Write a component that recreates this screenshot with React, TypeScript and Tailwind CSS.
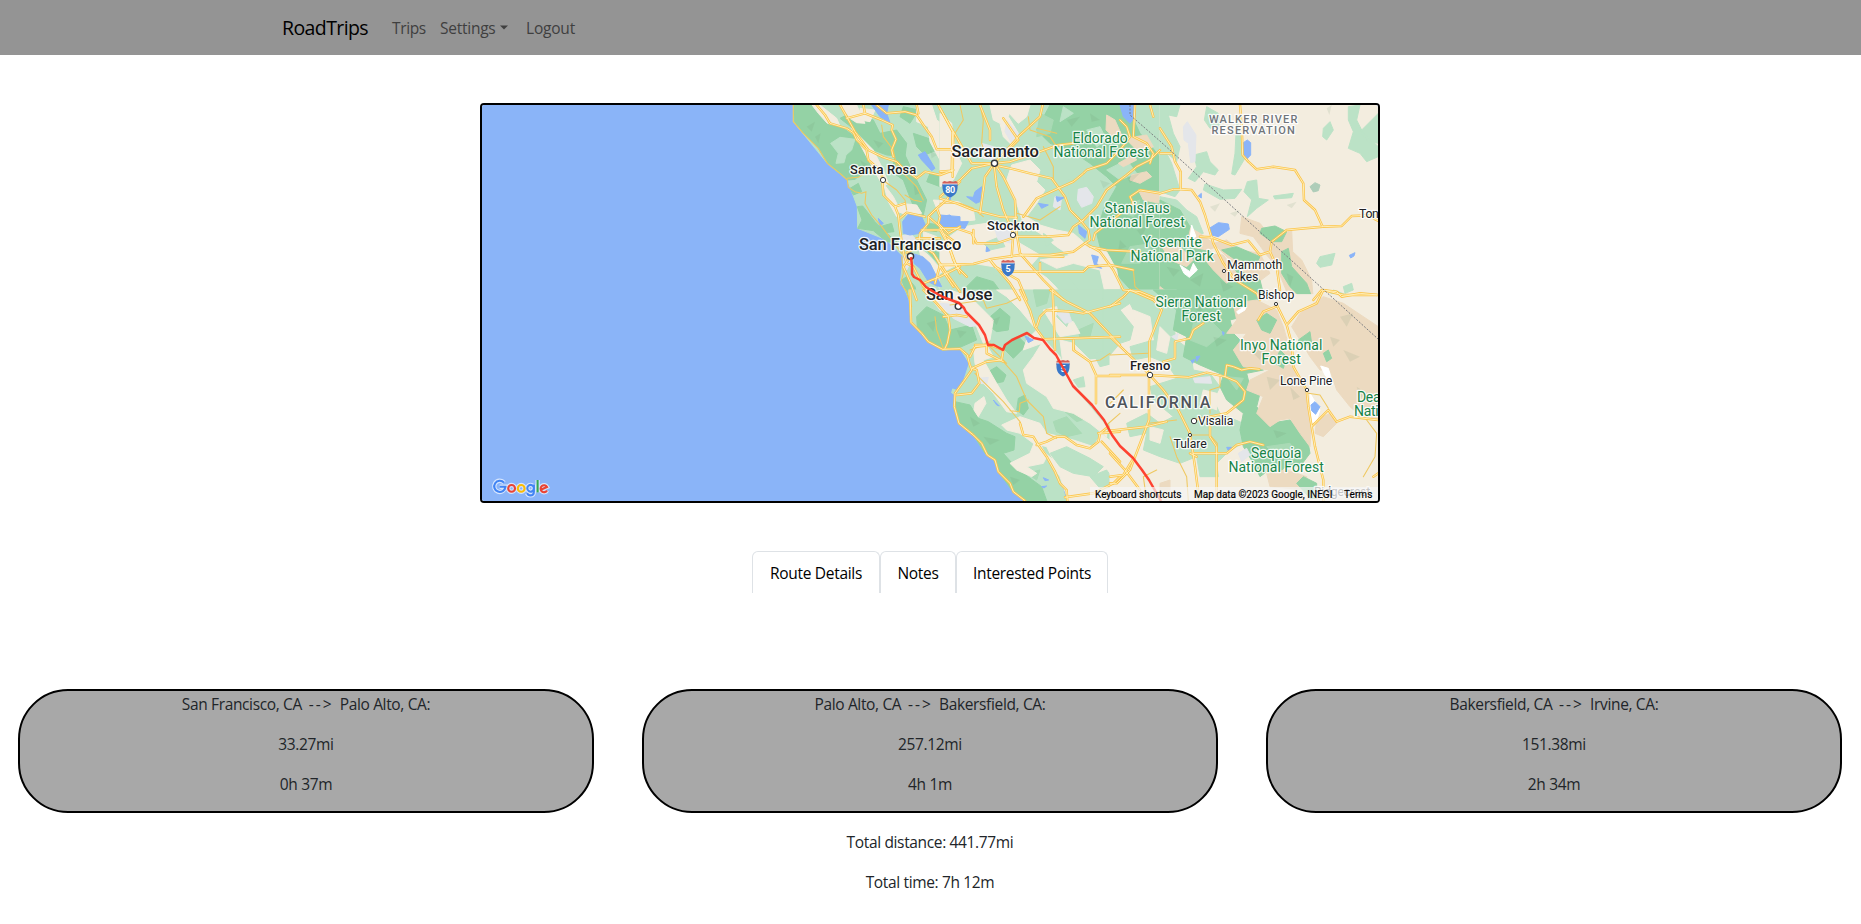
import React from "react";

type Tile = { x: number; y: number };
const A: Tile = { x: 740, y: 100 };
const B: Tile = { x: 940, y: 100 };
const C: Tile = { x: 1160, y: 100 };
const E: Tile = { x: 860, y: 290 };
const F: Tile = { x: 1110, y: 290 };

const CREAM = "#f3eddf";
const LIGHT = "#bbe2c6";
const DARK = "#94d2a5";
const MID = "#a9dab5";
const WATER = "#8ab4f8";
const BROWN = "#ecdac0";
const GREY = "#e4e6ea";

function At({ t, children }: { t: Tile; children: React.ReactNode }) {
  return <g transform={`translate(${t.x} ${t.y}) scale(0.33333)`}>{children}</g>;
}

const fills: { t: Tile; c: string; d: string }[] = [
  // North coast
  { t: A, c: LIGHT, d: "M160 0V65L262 190L322 240L352 320L353 385L440 420L490 470L482 540L508 600L660 600V0Z" },
  { t: A, c: DARK, d: "M160 0L163 65L190 100L235 145L262 190L322 240L345 238L372 215L395 220L400 190L375 160L345 110L300 78L262 70L235 40L200 0Z" },
  { t: A, c: LIGHT, d: "M272 130L300 112L345 118L335 150L318 165L312 188L288 190L295 160Z" },
  { t: A, c: DARK, d: "M300 55L330 40L400 60L420 100L470 90L500 130L495 170L440 165L400 150L370 120L345 90Z" },
  { t: A, c: DARK, d: "M470 150L495 165L530 240L560 300L550 345L525 330L505 280L490 240L455 215Z" },
  { t: A, c: DARK, d: "M520 100L580 120L590 150L555 165L530 140ZM570 220L610 230L600 260L560 245ZM490 20L535 30L510 70L480 50ZM330 265L355 250L365 275L340 285Z" },
  { t: A, c: DARK, d: "M352 320L368 318L405 365L440 400L475 430L440 425L400 392L353 385L366 360ZM420 380L455 370L462 395L435 398Z" },
  { t: A, c: DARK, d: "M485 540L500 530L525 560L535 600L508 600ZM550 440L600 460L640 500L620 520L585 480ZM565 370L600 375L590 395L560 390Z" },
  { t: A, c: CREAM, d: "M205 0L240 15L290 55L300 78L262 70L235 40ZM300 15L350 15L375 70L350 68L330 55ZM360 25L405 30L390 65L360 60Z" },
  { t: A, c: CREAM, d: "M335 85L355 105L400 150L430 210L445 250L430 260L405 215L380 170ZM530 15L575 15L590 60L640 95L660 150L660 260L625 235L600 180L570 125L565 80L530 65Z" },
  { t: A, c: CREAM, d: "M430 250L460 290L480 330L470 350L445 305ZM480 310L530 315L545 340L500 345L475 335ZM580 300L660 305V340L600 350ZM550 395L590 410L580 430L552 425ZM535 440L570 470L630 540L660 600H620L590 550L550 500Z" },
  { t: A, c: GREY, d: "M480 410L510 400L535 425L505 440ZM490 460L515 480L500 510L490 490ZM600 570L655 560L660 600H620Z" },
  // Central valley and Sierra
  { t: B, c: LIGHT, d: "M0 0H660V600H0Z" },
  { t: B, c: DARK, d: "M330 15H560L600 100L660 170V420L660 600H600L545 540L500 480L480 440L470 400L490 330L530 260L500 230L450 190L390 150L330 130L290 90Z" },
  { t: B, c: LIGHT, d: "M440 90L480 80L500 120L470 140ZM500 210L560 180L590 220L540 240ZM370 20L400 40L360 65ZM380 240L430 230L440 320L420 350L390 310Z" },
  { t: B, c: MID, d: "M300 40L340 60L330 100L290 110ZM545 490L570 440L640 430L600 490ZM520 330L600 300L580 350Z" },
  { t: B, c: CREAM, d: "M0 40L35 70L45 150L65 190L40 240L0 260ZM0 300L55 305L100 330L105 360L60 365L30 345L0 345ZM150 15L215 15L205 50L235 100L215 135L190 110L180 70L160 60ZM185 15L270 15L260 50L235 70Z" },
  { t: B, c: CREAM, d: "M215 195L270 180L300 210L290 245L315 270L290 310L260 350L300 375L350 390L400 400L440 435L430 465L395 470L350 440L300 400L250 370L230 310L200 240Z" },
  { t: B, c: CREAM, d: "M70 380L140 370L210 385L240 430L300 465L270 500L330 540L380 600H250L200 530L160 500L100 490L40 500L0 520V430ZM440 440L500 455L530 510L545 600H500L480 510L400 490L350 505L300 480L400 465Z" },
  { t: B, c: LIGHT, d: "M70 540L120 510L180 530L230 600H60ZM310 400L340 420L320 440ZM130 430L180 410L195 440L150 450ZM300 510L380 525L440 600H390Z" },
  { t: B, c: DARK, d: "M80 560L110 530L160 545L200 600H100Z" },
  { t: B, c: BROWN, d: "M500 45L525 60L545 105L520 110L498 90ZM535 190L580 165L590 180L550 200ZM575 225L620 215L635 230L600 250L570 240ZM595 270L660 275V310L610 300ZM555 115L620 105L640 140L600 160Z" },
  { t: B, c: GREY, d: "M415 268L440 262L460 290L455 310L425 322L412 300ZM125 130L160 140L165 180L130 175ZM345 290L365 292L360 330L340 320ZM200 60L235 100L215 130L195 95ZM160 375L225 385L215 430L175 420Z" },
  { t: B, c: WATER, d: "M540 15H585V50L570 70L550 50ZM105 275L125 260L120 305L108 310L80 290L100 292ZM0 350L30 345L50 365L85 365L75 385L0 380ZM295 310L325 315L305 325ZM415 375L440 395L435 415L418 400ZM455 465L475 470L470 490L485 505L465 500ZM140 440L150 452L138 455ZM348 290L372 293L352 305Z" },
  // Bays and lakes
  { t: A, c: WATER, d: "M488 365L505 342L545 350L556 375L540 400L510 405L490 400ZM522 462L548 470L570 490L590 530L605 560L590 558L565 545L540 505L522 490ZM395 15H445L440 40L450 68L420 50ZM535 165L555 155L585 205L575 212L545 180ZM600 345L660 350V375L620 368ZM415 355L430 370L420 378ZM620 255L640 270L630 300Z" },
  // Nevada
  { t: C, c: CREAM, d: "M0 0H660V600H0Z" },
  { t: C, c: LIGHT, d: "M0 15L60 15L50 50L25 45L40 100L60 140L50 185L0 140ZM0 120L35 190L60 270L45 290L0 275ZM230 60L248 130L255 175L225 225L215 222L225 160ZM140 20L175 40L180 80L150 85L133 60Z" },
  { t: C, c: LIGHT, d: "M102 165L140 155L150 185L175 210L165 225L130 215L105 245L85 235L110 200ZM135 252L190 270L245 268L225 295L180 298L130 270ZM262 245L290 240L295 295L325 300L290 325L262 350L275 300L252 275ZM340 288L400 280L395 293L345 297Z" },
  { t: C, c: LIGHT, d: "M565 20L600 15L590 60L610 100L655 140V170L620 185L600 160L565 145L580 95L565 60ZM600 95L655 40V130L625 125ZM490 85L510 65L520 90L500 120L488 110ZM470 490L480 470L525 460L515 495L480 502ZM550 560L575 550L580 570L555 580ZM520 570L560 585L540 600H500Z" },
  { t: C, c: LIGHT, d: "M0 290L50 300L80 330L110 350L130 400L90 410L40 380L0 390Z" },
  { t: C, c: BROWN, d: "M245 350L300 370L340 420L395 390L398 455L425 480L455 540L460 600H390L350 500L320 465L280 410L240 400ZM50 360L120 400L160 430L200 420L240 450L300 460L330 520L290 550L210 480L170 440L120 460L80 400Z" },
  { t: C, c: DARK, d: "M0 300L60 330L90 380L75 440L150 455L210 500L300 540L310 580L260 600H0ZM305 385L345 378L380 395L365 425L335 425L300 400ZM365 455L385 445L395 500L440 550L455 590L430 600L390 560L365 520ZM185 450L230 440L300 470L290 490L220 475Z" },
  { t: C, c: BROWN, d: "M0 430L60 440L100 480L80 500L30 480ZM120 460L190 465L230 520L200 550L160 510ZM0 560L20 575L0 590Z" },
  { t: C, c: "#fff", d: "M95 375L108 410L90 418ZM60 495L90 515L100 490L112 510L88 532L72 520ZM255 585L235 600H250Z" },
  { t: C, c: GREY, d: "M70 80L82 65L108 105L105 185L92 188L85 130L72 120Z" },
  { t: C, c: WATER, d: "M250 128L262 120L272 128V165L260 178L250 165ZM148 385L175 368L205 372L208 388L175 410L155 405ZM568 466L585 458L582 468L572 474ZM115 288L124 280V294Z" },
  { t: C, c: "#aecdb9", d: "M450 260L465 248L480 255L475 272L460 276Z" },
  // South coast
  { t: E, c: LIGHT, d: "M145 0L153 97L205 155L248 180L300 176L328 220L310 275L285 310L283 350L297 400L340 435L380 495L405 510L415 545L450 580L460 605L495 635L620 640L600 560L700 500L780 540V0Z" },
  { t: E, c: DARK, d: "M170 80L200 50L250 75L270 120L335 105L350 150L300 172L250 180L205 150L172 115ZM385 85L420 55L450 80L445 120L410 125L390 110ZM285 335L330 345L355 385L385 395L440 430L465 440L462 480L430 490L470 535L545 590L560 632H495L455 600L415 545L400 505L375 490L340 435L297 400Z" },
  { t: E, c: DARK, d: "M385 245L410 230L438 255L430 275L405 280ZM475 325L495 315L505 355L490 375L470 360ZM430 175L475 140L500 165L460 205Z" },
  { t: E, c: MID, d: "M580 395L620 380L665 430L620 440L590 425ZM615 365L680 385L650 395ZM620 510L690 530L670 550L630 535ZM655 120L700 100L690 140L660 145ZM520 0H570L560 40L530 50ZM500 550L540 540L530 570Z" },
  { t: E, c: CREAM, d: "M270 0L330 20L400 90L390 150L370 160L350 110L310 80L240 60L210 20ZM410 0H480L510 80L545 140L600 200L640 290L740 410V440L690 400L640 370L580 355L560 320L500 280L490 240L520 200L545 160L490 180L500 150L530 120L480 60L440 20Z" },
  { t: E, c: CREAM, d: "M550 60L590 50L600 90L640 95L660 130L600 140ZM600 150L640 160L690 210L780 200V400L740 400L690 340L640 280L610 230ZM340 170L380 165L400 200L370 210L410 280L440 330L470 370L440 365L400 310L360 270L345 220Z" },
  { t: E, c: CREAM, d: "M345 340L372 320L378 340L355 380L342 360ZM425 405L480 380L540 400L560 430L640 450L700 470L725 430L780 480V632H625L600 560L545 480L580 510L560 470L520 460L480 430L440 420ZM450 520L510 490L530 440L560 500L550 520L500 530L530 550L515 560L470 540Z" },
  { t: E, c: LIGHT, d: "M570 490L620 470L690 505L730 530L700 560L640 550L600 530ZM640 270L670 260L675 290L655 292ZM690 560L740 540L775 590L720 595ZM600 40L640 60L620 110L590 80ZM740 0H780V80L720 40ZM700 190L780 170V215L720 230Z" },
  { t: E, c: GREY, d: "M240 40L300 45L330 90L360 105L330 110L280 85ZM355 265L385 262L380 282L360 280ZM590 70L625 65L635 95L615 100Z" },
  { t: E, c: WATER, d: "M495 138L520 150L505 158ZM400 330L418 348L410 345ZM550 563L566 570L555 572ZM545 590L560 588L552 594Z" },
  { t: E, c: LIGHT, d: "M278 297L292 302L290 318L275 308Z" },
  // Southern Sierra
  { t: F, c: CREAM, d: "M0 14H825V640H0Z" },
  { t: F, c: LIGHT, d: "M-20 0H70L60 40L30 60L70 110L60 150L30 160L0 195L-20 190Z" },
  { t: F, c: LIGHT, d: "M40 0H200L240 60L190 110L200 150L240 180L250 240L300 250L330 290L310 330L330 370L400 400L420 450L360 480L320 520L325 560L270 560L260 500L210 520L150 500L100 480L110 430L60 440L50 400L110 370L150 400L190 380L130 330L120 290L200 265L170 220L120 200L70 210L60 170L130 150L110 110L70 60Z" },
  { t: F, c: CREAM, d: "M70 60L120 80L130 150L80 140ZM150 110L180 140L170 190L140 180ZM120 410L160 420L150 460L120 450ZM280 300L320 310L320 360L270 340Z" },
  { t: F, c: DARK, d: "M130 0H450L440 70L360 90L370 130L410 170L440 220L460 240L410 250L420 290L450 310L440 350L480 400L540 390L590 430L600 490L570 530L530 525L500 560L470 545L450 560L430 520L400 470L390 420L400 370L350 330L330 290L340 255L270 225L220 200L230 140L190 120L200 60Z" },
  { t: F, c: BROWN, d: "M370 40L440 30L500 60L520 110L540 180L560 260L590 310L605 400L600 470L570 430L540 385L510 390L480 410L440 370L460 320L410 300L420 270L480 240L400 230L370 180L410 130L350 130L380 90Z" },
  { t: F, c: BROWN, d: "M570 70L640 20L700 40L805 110V390L760 385L720 350L680 300L660 240L630 240L600 200L570 150L545 110ZM620 390L660 370L680 400L640 440L615 430ZM470 550L530 540L590 560L590 600L480 590ZM150 580L180 570V600H150Z" },
  { t: F, c: DARK, d: "M440 90L470 70L500 90L480 130L455 120ZM565 150L600 125L605 160L575 170ZM640 190L655 180L665 205L650 215ZM560 580L580 560L620 580V625H600ZM510 180L530 200L520 235L495 220Z" },
  { t: F, c: MID, d: "M250 100L300 90L340 130L290 170L240 150ZM470 470L540 460L560 490L500 500ZM350 260L400 265L380 300Z" },
  { t: F, c: "#fff", d: "M380 65L410 45L405 60L385 72ZM632 228L655 235L668 285L645 255ZM600 310L630 360L620 390L605 400Z" },
  { t: F, c: GREY, d: "M250 265L300 260L305 280L255 278ZM185 140L205 130L200 150ZM385 490L410 475L420 495L395 515Z" },
  { t: F, c: WATER, d: "M603 345L615 335L630 350L617 373L605 362ZM350 472L365 472L355 482ZM243 212L255 208L248 220ZM258 200L270 198L260 214ZM337 125L343 128L340 136Z" },
];

const shade: { t: Tile; d: string }[] = [
  { t: A, d: "M200 80L225 65L215 95ZM225 110L242 100L235 130ZM360 180L385 195L370 200ZM400 120L430 130L415 145ZM520 250L540 280L525 285ZM570 150L590 165L575 175Z" },
  { t: B, d: "M380 60L420 50L395 80ZM450 40L480 60L455 65ZM560 230L600 220L570 250ZM600 320L640 330L610 345ZM480 240L510 250L490 265ZM590 390L620 380L605 410ZM540 420L560 440L535 450Z" },
  { t: C, d: "M20 500L60 510L40 530ZM90 540L130 520L120 560ZM180 540L220 560L190 575ZM150 320L180 310L165 335ZM210 340L240 330L225 350ZM380 315L410 305L395 325ZM500 25L515 15L508 45ZM380 520L400 530L390 560Z" },
  { t: E, d: "M200 100L230 90L220 125ZM330 380L360 400L340 410ZM370 440L420 450L390 465ZM450 560L480 570L460 585ZM395 90L420 80L410 105ZM290 120L320 125L300 145Z" },
  { t: F, d: "M250 50L290 40L270 70ZM310 140L350 150L320 170ZM430 190L470 170L450 210ZM470 260L510 270L480 300ZM540 290L570 320L550 330ZM690 80L730 70L710 110ZM700 180L750 200L720 215ZM660 140L690 150L670 170ZM490 420L530 430L500 445ZM740 290L770 310L750 325Z" },
];

const minor: { t: Tile; d: string }[] = [
  { t: A, d: "M160 0L160 65L190 100L235 145L262 190L300 220L322 240L325 262L345 275L365 280L378 275L375 310L395 345L425 380L470 440L485 460" },
  { t: A, d: "M322 235L355 232L390 210M428 240L470 270L495 300L500 330M425 75L430 110L460 150L470 200L500 230L530 260L550 300M485 470L490 520L482 550L500 575L508 600L515 620M495 285L520 300L545 305" },
  { t: B, d: "M60 15L70 60L45 100M120 15L130 60L125 130L135 160M265 50L270 90L330 110L350 140M290 85L350 100M0 310L60 310L100 325L130 350M580 510L585 560L620 590M230 340L300 360L360 320M340 240L340 200L310 140" },
  { t: E, d: "M225 80L230 120L250 175M345 250L430 335L480 395L490 430M430 215L470 260L500 330L550 380L560 430L590 445M505 330L480 340L478 365L450 362M270 45L370 30L380 55L440 40L480 20M330 180L390 160M640 150L645 185L690 215L720 210L750 190M780 370L740 405M380 160L440 220L425 210" },
  { t: F, d: "M0 195L115 190M330 260L330 290L300 300V370M0 340L40 300M115 400L200 390M180 440L200 500L230 560L235 632M595 310L630 315L655 355M770 390L800 430L795 500L760 560M140 540L100 560L110 632M240 435H300L322 460L320 560" },
];

const major: { t: Tile; d: string }[] = [
  { t: A, d: "M230 15L255 45L270 70L320 85L340 98L350 120L380 150L385 180L425 215L430 285L465 320L475 345L480 390L485 425L492 465M300 15L320 50L345 95L385 150L430 172L470 185L495 210L530 235L555 215L600 225L640 210M370 15L375 40L425 60L458 75L455 90L468 118L455 150L460 170M375 40L320 55M410 15L440 40L495 35L530 45L550 75L575 110L590 148H640M530 15L535 40" },
  { t: A, d: "M595 15L638 95L635 215M660 245L640 265L620 300L590 325L565 350L565 370L540 400L535 440L500 458M480 355L500 338L555 350M590 325L600 350L595 370L625 400L660 380M545 390L600 390L625 435L640 480L660 520M465 320L495 310M565 350L600 380M492 465L500 490L520 500L550 560L600 600M540 435L580 460L620 520L660 575M600 495H660M550 550L600 530L660 500M530 415L600 415M505 480L490 500L510 545L530 600M610 400L650 430M580 460L600 495L585 550" },
  { t: B, d: "M0 25L40 95L38 230M40 95L95 190L163 190L200 150L240 105L300 50L308 15M163 190L95 205L60 240L0 290M163 190L210 185L300 155L355 135L400 130M163 200L170 260L190 330L220 400L215 470M163 190L190 230L225 300L230 400L240 460L310 540L370 600M163 195L210 205L270 220L335 235L375 290L390 330L425 365L445 390L450 420L435 430L480 455L520 510L550 570L600 575L660 600M250 350L290 295L355 265L400 245L430 220L440 210L500 190L540 150L570 110L560 80L540 60M425 365L470 320L500 270L560 225L590 200L630 180L660 150" },
  { t: B, d: "M0 295L50 310L100 330L180 350L230 352M0 385L50 385L95 400L110 430L170 430L230 410L320 410L385 405L400 380L430 360M0 495L100 492L150 478L240 465L330 465L400 455L435 430M240 465L370 470M200 515L430 515L445 500L510 495L580 510M190 55L235 120L215 140M130 270L135 230L160 195M150 480L210 550L240 600M150 480L165 500L235 540L260 600M100 390V430M0 380L20 420L50 500L80 530M0 500L40 560M450 440L500 450L600 455M120 340L130 270M460 420L465 400L530 350L580 310L570 290L600 270L660 280M585 15L580 110L620 130L640 160L630 190M630 15L640 50M120 15L150 90V120M0 215L35 212M300 490V515" },
  { t: C, d: "M0 85L35 140L45 185L62 215L62 268L95 270L120 305L135 345L160 430L190 490L225 540L290 580L300 600M0 160L35 160M0 280L40 268L62 268M240 15L245 75L248 165L265 185L290 208L340 200L405 210L430 250L432 300L465 330L488 380L545 378L575 348L655 345M488 380L380 390L335 425L330 455L350 500L360 570M120 410L155 412L215 435L265 422L300 465L330 455M460 600L485 570L530 575L545 590L600 580L655 585M640 355L655 363" },
  { t: E, d: "M150 0L153 97L185 130L205 155L248 178L300 176L322 195L328 220L335 240L310 275L285 310L283 350L297 400L340 435L365 460L382 495L405 510L415 545L450 580L460 605L495 632M190 0L230 40L265 80L270 120L262 160L255 175M250 80L290 75L320 80M345 165L390 165L430 180L425 210L380 215L335 235L350 240L358 280L335 310L290 315M330 200L345 170L400 165M480 0L510 60L525 110L550 145M530 110L540 80L560 60L640 65L670 70L780 40M550 148L640 145L780 140M578 0L585 180M640 150L640 180L690 215L708 255V340M708 258H780M570 0L620 35L690 70L780 165" },
  { t: E, d: "M480 400L490 435L520 440L535 465L560 500L585 545L600 580L620 600L622 632M530 465L560 455L590 440L615 440L650 465L690 475L715 455L720 430L745 410M725 455L780 515M715 430L780 425M615 622L700 610L760 580L780 560M380 160L380 190L430 215" },
  { t: F, d: "M0 140L115 250L160 300L205 360L240 430L255 530L268 632M0 255L120 255L235 262L290 248L345 260L380 275L405 305L400 330L350 370L300 380L250 390M117 250L117 390L60 540L20 580H0M345 260L350 225L370 230L395 240L420 235L448 238M118 250V155L155 60L130 30L60 0M160 215L195 205L195 155L240 145L250 120L280 100M0 422L110 410L170 395M250 490H350L380 465L420 455L460 465M0 50L40 20L60 0M300 380V440L320 470V632" },
  { t: F, d: "M498 40L530 105L545 160L550 230L590 300L595 350L605 410L615 470L640 570V632M530 105L565 65L620 40L640 0L700 15L800 15M605 410L655 360L680 395L720 380L805 390M498 50L460 65L445 90M0 490L45 540L90 600M0 560L40 555L70 505M240 490L260 500M790 560L805 550" },
];

const routeD =
  "M911 257L912 266L912 274L914 277L920 280L926 287L934 292L943 297L959 303L964 308L966 312L979 325L985 335L988 345L994 345L1003 350L1005 345L1012 340L1027 333L1034 338L1043 340L1050 349L1056 355L1073 386L1092 405L1104 420L1112 435L1120 446L1133 458L1142 470L1149 480L1161 501";

type L = { x: number; y: number; s: number; c?: string; w?: number; a?: "start" | "middle"; tl?: number; t: string };
const GREEN = "#188448";
const labels: L[] = [
  { x: 995, y: 157, s: 16.5, w: 500, tl: 87, t: "Sacramento" },
  { x: 883, y: 174, s: 13, w: 500, tl: 66, t: "Santa Rosa" },
  { x: 1013, y: 230, s: 13, w: 500, tl: 52, t: "Stockton" },
  { x: 910, y: 250, s: 16.5, w: 500, tl: 102, t: "San Francisco" },
  { x: 959, y: 300, s: 16.5, w: 500, tl: 66, t: "San Jose" },
  { x: 1150, y: 370, s: 13, w: 500, tl: 40, t: "Fresno" },
  { x: 1100, y: 143, s: 14, c: GREEN, tl: 55, t: "Eldorado" },
  { x: 1101, y: 157, s: 14, c: GREEN, tl: 95, t: "National Forest" },
  { x: 1137, y: 213, s: 14, c: GREEN, tl: 65, t: "Stanislaus" },
  { x: 1137, y: 227, s: 14, c: GREEN, tl: 95, t: "National Forest" },
  { x: 1172, y: 247, s: 14, c: GREEN, tl: 59, t: "Yosemite" },
  { x: 1172, y: 261, s: 14, c: GREEN, tl: 83, t: "National Park" },
  { x: 1201, y: 307, s: 14, c: GREEN, tl: 91, t: "Sierra National" },
  { x: 1201, y: 321, s: 14, c: GREEN, tl: 39, t: "Forest" },
  { x: 1281, y: 350, s: 14, c: GREEN, tl: 82, t: "Inyo National" },
  { x: 1281, y: 364, s: 14, c: GREEN, tl: 39, t: "Forest" },
  { x: 1276, y: 458, s: 14, c: GREEN, tl: 50, t: "Sequoia" },
  { x: 1276, y: 472, s: 14, c: GREEN, tl: 95, t: "National Forest" },
  { x: 1357, y: 402, s: 14, c: GREEN, a: "start", t: "Death Valley" },
  { x: 1354, y: 416, s: 14, c: GREEN, a: "start", t: "National Park" },
  { x: 1253, y: 123, s: 11, w: 500, c: "#70757a", tl: 88, t: "WALKER RIVER" },
  { x: 1253, y: 134, s: 11, w: 500, c: "#70757a", tl: 83, t: "RESERVATION" },
  { x: 1157.5, y: 407.5, s: 16, w: 500, c: "#4f545a", tl: 105, t: "CALIFORNIA" },
  { x: 1227, y: 269, s: 12.3, a: "start", tl: 55, t: "Mammoth" },
  { x: 1227, y: 281, s: 12.3, a: "start", tl: 31, t: "Lakes" },
  { x: 1276, y: 299, s: 12.3, tl: 36, t: "Bishop" },
  { x: 1306, y: 385, s: 12.3, tl: 52, t: "Lone Pine" },
  { x: 1198, y: 425, s: 12.3, a: "start", tl: 35, t: "Visalia" },
  { x: 1190, y: 448, s: 12.3, tl: 33, t: "Tulare" },
  { x: 1359, y: 218, s: 12.3, a: "start", t: "Tonopah" },
  { x: 1342, y: 496, s: 12.3, tl: 56, c: "#555", t: "Ridgecrest" },
];

const dots: [number, number, number][] = [
  [994.5, 163.3, 3.1], [883, 180, 2.6], [1013, 235, 2.6], [910.5, 256.3, 3.1], [958.3, 306.3, 3.1], [1150, 375, 2.7],
  [1224, 271, 1.6], [1276, 304, 1.6], [1307, 390, 1.7], [1194, 421, 2.7], [1190, 435, 1.6],
];

function Shield({ x, y, n }: { x: number; y: number; n: string }) {
  const w = n.length > 1 ? 7.5 : 6.5;
  return (
    <g transform={`translate(${x} ${y})`}>
      <path d={`M${-w} -3V-7L${-w + 2} -8L-3 -7.2L0 -8L3 -7.2L${w - 2} -8L${w} -7V-3Z`} fill="#d2605a" />
      <path d={`M${-w} -5H${w}C${w + 0.5} 2 ${w - 1} 6 0 8.6C${-w + 1} 6 ${-w - 0.5} 2 ${-w} -5Z`} fill="#3a78c8" />
      <path d={`M${-w} -5H${w}`} stroke="#fff" strokeWidth="0.8" />
      <text x="0" y="4" textAnchor="middle" fontSize="9" fontWeight="700" fill="#fff">{n}</text>
    </g>
  );
}

function TripMap() {
  return (
    <svg viewBox="482 105 896 396" className="block h-full w-full font-['Roboto',sans-serif]">
      <rect x="482" y="105" width="896" height="396" fill={WATER} />
      {fills.map((f, i) => (
        <At key={i} t={f.t}><path d={f.d} fill={f.c} stroke={f.c} strokeWidth="3" strokeLinejoin="round" /></At>
      ))}
      {shade.map((f, i) => (
        <At key={i} t={f.t}><path d={f.d} fill="#6f8f70" opacity="0.13" /></At>
      ))}
      <g fill="none" strokeLinejoin="round" strokeLinecap="round">
        {minor.map((f, i) => (
          <At key={i} t={f.t}><path d={f.d} stroke="#efc860" strokeWidth="3.2" /></At>
        ))}
        {major.map((f, i) => (
          <At key={i} t={f.t}><path d={f.d} stroke="#fbc44a" strokeWidth="7.4" /></At>
        ))}
        {major.map((f, i) => (
          <At key={i} t={f.t}><path d={f.d} stroke="#fff0bd" strokeWidth="2.8" /></At>
        ))}
        <path d="M1130 105V115L1161 142L1378 339" stroke="#7b7d80" strokeWidth="1" strokeDasharray="2 1.5" strokeLinecap="butt" />
      </g>
      <Shield x={950} y={189} n="80" />
      <Shield x={1008} y={268} n="5" />
      <Shield x={1063} y={368} n="5" />
      {dots.map(([x, y, r], i) => (
        <circle key={i} cx={x} cy={y} r={r} fill="#fff" stroke="#33363a" strokeWidth={r > 3 ? 1.4 : 1} />
      ))}
      {labels.map((l, i) => (
        <text
          key={i}
          x={l.x}
          y={l.y + 0.3}
          fontSize={l.s}
          fontWeight={l.w ?? 400}
          fill={l.c ?? "#202124"}
          textAnchor={l.a ?? "middle"}
          textLength={l.tl}
          stroke="#fff"
          strokeOpacity="0.85"
          strokeWidth="2.6"
          strokeLinejoin="round"
          paintOrder="stroke"
        >
          {l.t}
        </text>
      ))}
      <path d={routeD} fill="none" stroke="#ff3322" strokeOpacity="0.92" strokeWidth="2.5" strokeLinejoin="round" />
      <rect x="1090" y="487" width="288" height="14" fill="#f5f5f5" opacity="0.7" />
      <g fontSize="10" fill="#000" stroke="#000" strokeWidth="0.15">
        <text x="1095" y="498.3" textLength="86">Keyboard shortcuts</text>
        <text x="1194" y="498.3" textLength="138">Map data ©2023 Google, INEGI</text>
        <text x="1344" y="498.3" textLength="28">Terms</text>
      </g>
      <g fill="none" strokeLinecap="butt">
        {[{ c: "#fff", w: 4.4, o: 0.65 }, { c: "", w: 2.1, o: 1 }].map((p, i) => (
          <g key={i} strokeWidth={p.w} opacity={p.o}>
            <path d="M504 482.6A5.6 5.6 0 1 0 505.4 486.8H499.6" stroke={p.c || "#4285f4"} />
            <circle cx="511.6" cy="488.4" r="3.4" stroke={p.c || "#ea4335"} />
            <circle cx="521.2" cy="488.4" r="3.4" stroke={p.c || "#fbbc05"} />
            <path d="M533.9 484.6V491.5Q533.9 495.4 530.4 495.4Q528 495.4 527.1 493.2M533.9 488.4A3.3 3.4 0 1 1 533.9 488.2" stroke={p.c || "#4285f4"} />
            <path d="M537.6 480V492.4" stroke={p.c || "#34a853"} />
            <path d="M540.8 489.8L547 487A3.4 3.5 0 1 0 547 490.4" stroke={p.c || "#ea4335"} />
          </g>
        ))}
      </g>
    </svg>
  );
}

const legs = [
  { from: "San Francisco, CA", to: "Palo Alto, CA:", dist: "33.27mi", time: "0h 37m" },
  { from: "Palo Alto, CA", to: "Bakersfield, CA:", dist: "257.12mi", time: "4h 1m" },
  { from: "Bakersfield, CA", to: "Irvine, CA:", dist: "151.38mi", time: "2h 34m" },
];

const tabs = [
  { label: "Route Details", box: "w-[128px]" },
  { label: "Notes", box: "w-[76px]" },
  { label: "Interested Points", box: "w-[152px]" },
];

export default function App() {
  return (
    <div className="flex h-[924px] w-full flex-col overflow-hidden bg-white font-['Open_Sans',sans-serif] text-[15.5px] leading-6 tracking-[-0.35px] text-[#212529]">
      <nav className="flex h-[55px] shrink-0 items-center bg-[#949494] pl-[282px] pt-px text-[#3f3f3f]">
        <span className="w-[110px] text-[19.5px] tracking-[-0.6px] text-black">RoadTrips</span>
        <span className="w-12">Trips</span>
        <span className="flex w-[86px] items-center gap-[5px] tracking-[-0.25px]">
          Settings
          <svg viewBox="0 0 10 5" className="mb-0.5 h-[5px] w-2"><path d="M0 0H10L5 5Z" fill="currentColor" /></svg>
        </span>
        <span className="tracking-[-0.2px]">Logout</span>
      </nav>
      <main className="flex flex-col items-center pr-px">
        <div className="mt-12 h-[400px] w-[900px] shrink-0 overflow-hidden rounded border-2 border-black">
          <TripMap />
        </div>
        <div className="mt-12 flex h-[42px] shrink-0 justify-center text-black">
          {tabs.map((t) => (
            <div key={t.label} className={`${t.box} flex items-center justify-center whitespace-nowrap rounded-t-md border border-b-0 border-[#dee2e6] pt-px tracking-[-0.3px]`}>
              {t.label}
            </div>
          ))}
        </div>
        <div className="mt-24 flex shrink-0 justify-center gap-12">
          {legs.map((l) => (
            <div key={l.from} className="flex h-[124px] w-[576px] flex-col items-center gap-4 rounded-[50px] border-2 border-black bg-[#a8a8a8] pt-px">
              <p>
                {l.from} <span className="ml-[3px] mr-[2.5px] tracking-[2px]">{"-->"}</span> {l.to}
              </p>
              <p>{l.dist}</p>
              <p>{l.time}</p>
            </div>
          ))}
        </div>
        <div className="mt-[17px] flex flex-col items-center gap-4">
          <p>Total distance: 441.77mi</p>
          <p>Total time: 7h 12m</p>
        </div>
      </main>
    </div>
  );
}
